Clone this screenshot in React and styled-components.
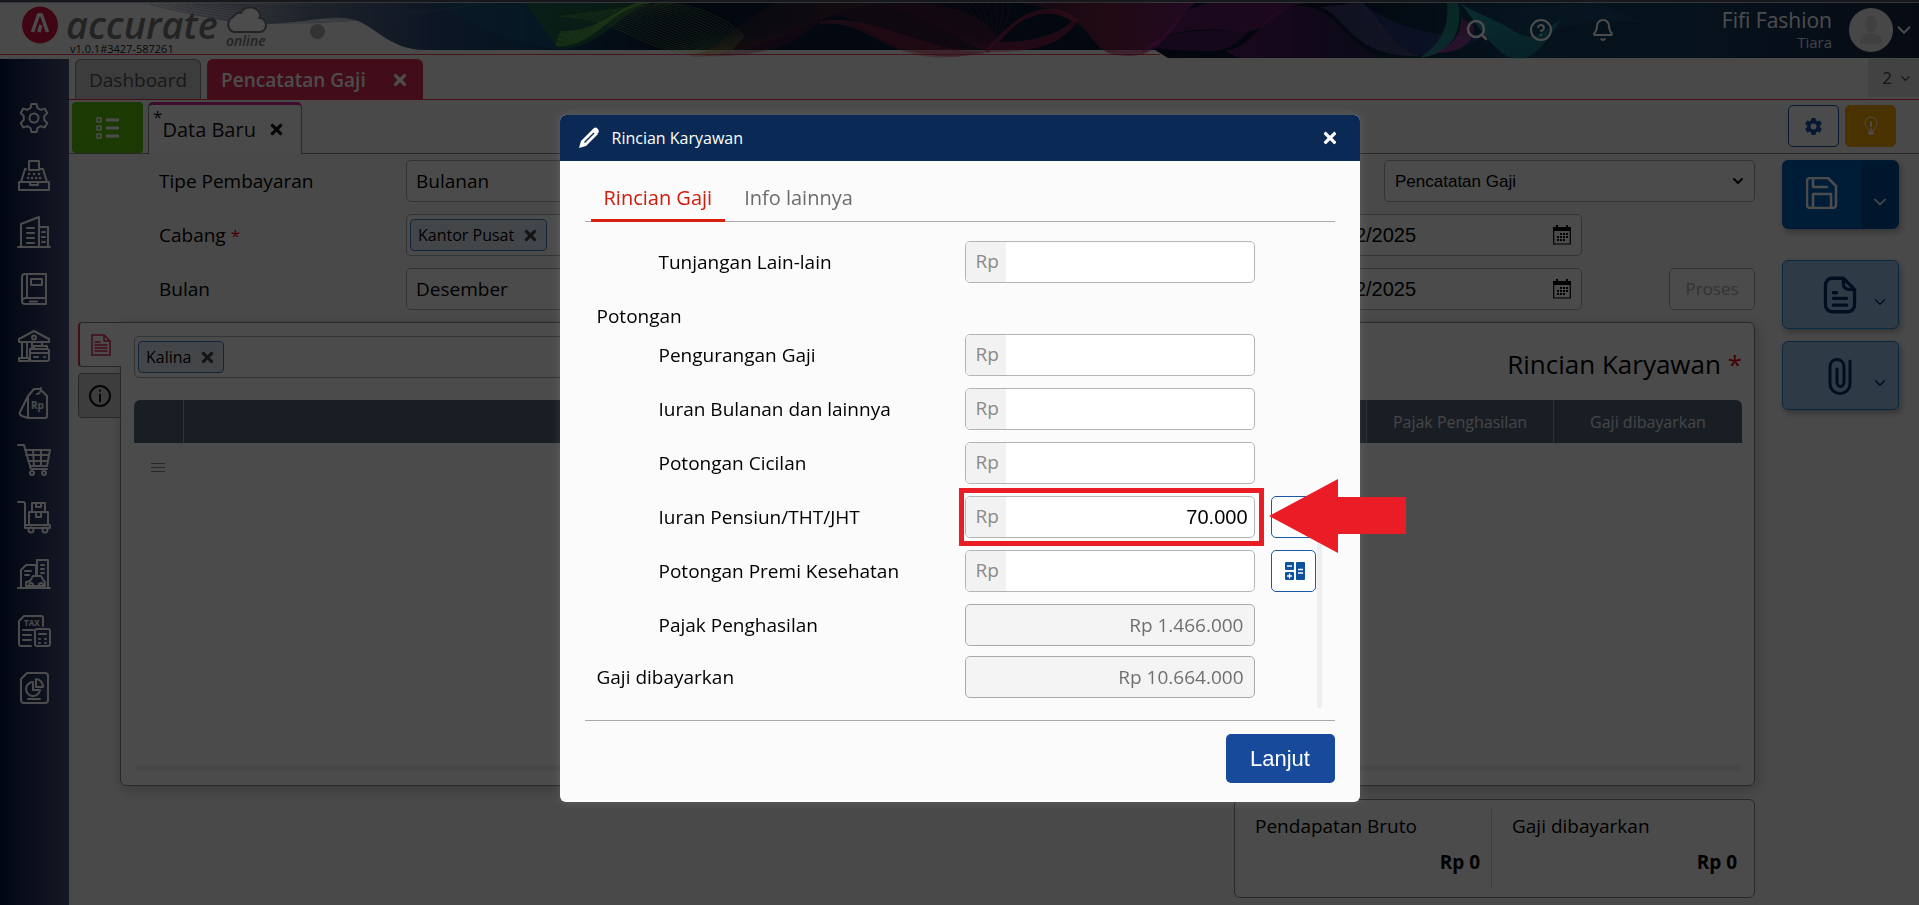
import React from "react";
import styled, { createGlobalStyle, css } from "styled-components";
import { Search, CircleHelp, Bell, ChevronDown } from "lucide-react";
import { FaTimes } from "react-icons/fa";
import { IoSettingsSharp } from "react-icons/io5";

const sans = `"Segoe UI", "Open Sans", "Noto Sans", sans-serif`;
const arial = `"Liberation Sans", Arial, sans-serif`;

const GlobalStyle = createGlobalStyle`
  *, *::before, *::after { box-sizing: border-box; }
  body { margin: 0; background: #f4f4f4; color: #000; font-family: ${sans}; font-size: 19px; line-height: 24px; }
  button, input, select { font: inherit; color: inherit; margin: 0; }
  button { cursor: pointer; }
  svg { display: block; flex: none; }
`;

/* ---------- page shell ---------- */

const Page = styled.div`
  min-height: 100vh;
  display: flex;
  flex-direction: column;
`;

const Header = styled.header`
  position: relative;
  height: 59px;
  display: flex;
  align-items: center;
  justify-content: space-between;
  border-top: 2px solid #4a5060;
  background: #f4f4f4;
`;

const Waves = styled.svg`
  position: absolute;
  inset: 0;
  width: 100%;
  height: 100%;
`;

const Brand = styled.div`
  position: relative;
  display: flex;
  align-items: flex-start;
  padding-left: 22px;
`;

const Wordmark = styled.div`
  margin-left: 8px;
  display: flex;
  flex-direction: column;
`;

const BrandName = styled.span`
  font: italic 600 38px/36px ${sans};
  color: #777;
`;

const Version = styled.span`
  font-size: 11px;
  line-height: 14px;
  padding-left: 4px;
  color: #222;
`;

const CloudMark = styled.div`
  display: flex;
  flex-direction: column;
  align-items: center;
  margin-left: 6px;
  font: italic 600 14px/14px ${sans};
  color: #777;
`;

const StatusDot = styled.span`
  width: 15px;
  height: 15px;
  border-radius: 50%;
  background: #aaa;
  margin: 18px 0 0 42px;
`;

const HeaderTools = styled.div`
  position: relative;
  display: flex;
  align-items: center;
  color: #fff;
  padding: 0 4px 2px 0;
`;

const IconButton = styled.button`
  display: grid;
  place-items: center;
  width: 24px;
  height: 24px;
  padding: 0;
  border: 0;
  background: none;
  color: inherit;
  margin-right: ${(p) => p.$gap || 0}px;
`;

const Account = styled.div`
  text-align: right;
  font-size: 21px;
  line-height: 24px;
  margin-right: 17px;
`;

const AccountUser = styled.div`
  font-size: 15px;
  line-height: 20px;
  color: #d8dce8;
`;

const Avatar = styled.span`
  display: grid;
  place-items: center;
  width: 44px;
  height: 44px;
  border-radius: 50%;
  background: #eee;
`;

const Body = styled.div`
  flex: 1;
  display: flex;
`;

const Sidebar = styled.nav`
  width: 69px;
  flex: none;
  background: linear-gradient(90deg, #00163f, #4a557c);
  display: flex;
  flex-direction: column;
  align-items: center;
  gap: 21px;
  padding: 42px 0 0 1px;
  color: #fff;
`;

const NavLink = styled.a`
  display: block;
  color: inherit;
`;

const Main = styled.main`
  flex: 1;
  min-width: 0;
  display: flex;
  flex-direction: column;
`;

/* ---------- tab bars ---------- */

const TabBar = styled.div`
  display: flex;
  gap: 6px;
  height: 41px;
  padding-left: 6px;
  border-bottom: 1px solid #f0304e;
`;

const PageTab = styled.button`
  display: flex;
  align-items: center;
  gap: 25px;
  padding: 1px 13px 0;
  border: 1px solid #888;
  border-bottom: 0;
  border-radius: 6px 6px 0 0;
  background: #c8c8c8;
  color: #555;
  ${(p) =>
    p.$active &&
    css`
      background: #dc2a52;
      border-color: #dc2a52;
      color: #fff;
      font-weight: 600;
    `}
`;

const TabCount = styled.button`
  display: flex;
  align-items: center;
  justify-content: flex-end;
  gap: 6px;
  width: 51px;
  height: 38px;
  margin-left: auto;
  padding: 0 6px;
  border: 0;
  background: #dcdcdc;
  color: #444;
  font-size: 17px;
`;

const SubBar = styled.div`
  display: flex;
  align-items: flex-end;
  height: 54px;
  padding: 0 23px 0 3px;
  border-bottom: 1px solid #888;
`;

const ListButton = styled.button`
  display: grid;
  place-items: center;
  width: 71px;
  height: 51px;
  padding: 0;
  border: 0;
  border-radius: 4px;
  background: #5cc00c;
  color: #fff;
`;

const RecordTab = styled.button`
  display: flex;
  align-items: center;
  gap: 12px;
  height: 52px;
  margin: 0 0 -1px 5px;
  padding: 0 16px 0 4px;
  border: 1px solid #888;
  border-top: 3px solid #c8269a;
  border-bottom: 0;
  border-radius: 5px 5px 0 0;
  background: #f8f8f8;
  color: #111;
  font-size: 20px;
`;

const Dirty = styled.sup`
  align-self: flex-start;
  margin-right: -12px;
  font-size: 17px;
  line-height: 24px;
`;

const SubTools = styled.div`
  display: flex;
  gap: 6px;
  margin: 0 0 6px auto;
`;

const SquareButton = styled.button`
  display: grid;
  place-items: center;
  width: 51px;
  height: 42px;
  padding: 0;
  border-radius: 5px;
  border: 1px solid ${(p) => (p.$amber ? "#f7a700" : "#1452a8")};
  background: ${(p) => (p.$amber ? "#f7a700" : "#fcfcfc")};
  color: ${(p) => (p.$amber ? "#fff" : "#1452a8")};
`;

/* ---------- record form ---------- */

const Workspace = styled.div`
  flex: 1;
  display: flex;
  gap: 27px;
  padding: 6px 20px 7px 9px;
`;

const Content = styled.div`
  flex: 1;
  min-width: 0;
  display: flex;
  flex-direction: column;
`;

const FormRows = styled.div`
  display: flex;
  flex-direction: column;
  gap: 12px;
  padding-left: 81px;
  margin-bottom: 12px;
`;

const FormRow = styled.div`
  display: flex;
  align-items: center;
  height: 42px;
`;

const FormLabel = styled.label`
  width: 247px;
`;

const Required = styled.span`
  color: #e00;
  font-size: ${(p) => (p.$large ? 26 : 17)}px;
`;

const boxed = css`
  height: 42px;
  border: 1px solid #aaa;
  border-radius: 5px;
  background: #fcfcfc;
`;

const TextInput = styled.input`
  ${boxed}
  width: 420px;
  padding: 0 9px;
`;

const TokenBox = styled.div`
  ${boxed}
  display: flex;
  align-items: center;
  width: ${(p) => (p.$wide ? "620px" : "420px")};
  padding: 0 3px;
`;

const Token = styled.span`
  display: flex;
  align-items: center;
  gap: 8px;
  height: 32px;
  padding: 0 7px;
  border: 1px solid #3f7ac4;
  border-radius: 4px;
  background: #e2ecf6;
  font-size: 16px;
`;

const TokenRemove = styled.button`
  display: grid;
  padding: 0;
  border: 0;
  background: none;
  color: #444;
`;

const FormSide = styled.div`
  display: flex;
  justify-content: ${(p) => (p.$end ? "flex-end" : "space-between")};
  width: 450px;
  margin-left: auto;
`;

const SelectWrap = styled.div`
  ${boxed}
  width: 371px;
  display: grid;
  grid-template-columns: 1fr 24px;
  align-items: center;
  select {
    grid-area: 1 / 1 / 2 / 3;
    height: 40px;
    padding: 0 10px;
    border: 0;
    background: none;
    appearance: none;
    font: 17px ${arial};
  }
  svg { grid-area: 1 / 2; pointer-events: none; }
`;

const DateBox = styled.div`
  ${boxed}
  display: flex;
  align-items: center;
  width: 277px;
  padding: 0 10px;
  input {
    flex: 1;
    min-width: 0;
    padding: 0;
    border: 0;
    background: none;
    font: 20px ${arial};
  }
`;

const ProcessButton = styled.button`
  ${boxed}
  width: 86px;
  padding: 0;
  color: #aaa;
  font-size: 17px;
`;

/* ---------- employee panel ---------- */

const PanelRow = styled.div`
  flex: 1;
  display: flex;
`;

const SideTabs = styled.div`
  display: flex;
  flex-direction: column;
  gap: 6px;
  width: 43px;
  margin-right: -1px;
  z-index: 1;
`;

const SideTab = styled.button`
  display: grid;
  place-items: center;
  height: 45px;
  padding: 0;
  border: 1px solid #888;
  border-radius: 4px 0 0 4px;
  background: #ccc;
  color: #111;
  ${(p) =>
    p.$active &&
    css`
      border-right: 0;
      border-left: 2px solid #dc2a52;
      background: #fafafa;
      color: #dc2a52;
    `}
`;

const Panel = styled.section`
  flex: 1;
  display: flex;
  flex-direction: column;
  padding: 13px 12px 13px 13px;
  border: 1px solid #888;
  border-radius: 0 6px 6px 6px;
  background: #fafafa;
  box-shadow: 2px 3px 14px rgba(0, 0, 0, 0.22);
`;

const PanelTop = styled.div`
  display: flex;
  align-items: flex-start;
  justify-content: space-between;
  height: 64px;
`;

const PanelTitle = styled.h2`
  margin: 10px 0 0;
  font-size: 26px;
  line-height: 36px;
  font-weight: 400;
`;

const Grid = styled.table`
  width: 100%;
  border-collapse: separate;
  border-spacing: 0;
  table-layout: fixed;
  th {
    height: 43px;
    padding: 0;
    background: #56657c;
    color: #e4e6ea;
    font-size: 16px;
    font-weight: 400;
    border-right: 1px solid #a0a8b4;
  }
  th:first-child { border-top-left-radius: 6px; }
  th:last-child { border-top-right-radius: 6px; border-right: 0; }
  td { padding: 17px 17px 0; color: #888; }
`;

const ScrollTrack = styled.div`
  height: 6px;
  margin: auto 2px 1px;
  border-radius: 3px;
  background: #eee;
`;

const Summary = styled.section`
  display: flex;
  align-self: flex-end;
  width: 521px;
  margin-top: 13px;
  padding: 9px 0;
  border: 1px solid #888;
  border-radius: 6px;
  background: #fafafa;
`;

const SummaryCell = styled.div`
  flex: ${(p) => (p.$last ? 1 : "0 0 256px")};
  padding: 5px ${(p) => (p.$last ? 17 : 11)}px 14px 20px;
  border-left: ${(p) => (p.$last ? "1px solid #ccc" : "0")};
`;

const SummaryValue = styled.div`
  margin-top: 12px;
  text-align: right;
  font-weight: 700;
`;

const Actions = styled.aside`
  display: flex;
  flex-direction: column;
  gap: 12px;
  width: 117px;
`;

const ActionButton = styled.button`
  display: grid;
  grid-template-columns: 1fr 36px;
  align-items: center;
  justify-items: center;
  height: 69px;
  padding: 0;
  border: 1px solid #1c86d8;
  border-radius: 6px;
  background: #9cc6ec;
  color: #00306c;
  box-shadow: 2px 3px 6px rgba(0, 0, 0, 0.3);
  svg:first-child { justify-self: end; margin-right: 3px; }
  svg:last-child { margin-top: 14px; }
  ${(p) =>
    p.$primary &&
    css`
      margin-bottom: 19px;
      border-color: #0058ac;
      background: linear-gradient(90deg, #0062ba 68%, #004c98 68%);
      color: #fff;
      svg:first-child { margin: 0 24px 3px 0; }
    `}
`;

/* ---------- dialog ---------- */

const Backdrop = styled.div`
  position: fixed;
  inset: 0;
  z-index: 10;
  display: flex;
  justify-content: center;
  align-items: flex-start;
  padding-top: 115px;
  background: rgba(0, 0, 0, 0.7);
`;

const Dialog = styled.section`
  width: 800px;
  border-radius: 6px;
  background: #fbfbfb;
  box-shadow: 0 0 8px rgba(255, 255, 255, 0.12);
`;

const DialogHeader = styled.header`
  display: flex;
  align-items: center;
  height: 46px;
  padding: 0 18px;
  border-radius: 6px 6px 0 0;
  background: #0a2a55;
  color: #fff;
  h1 {
    flex: 1;
    margin: 0 0 0 12px;
    font-size: 16px;
    font-weight: 400;
  }
`;

const DialogBody = styled.div`
  padding: 18px 25px 19px;
`;

const DialogTabs = styled.div`
  display: flex;
  gap: 6px;
  padding-left: 6px;
  border-bottom: 1px solid #aaa;
`;

const DialogTab = styled.button`
  height: 43px;
  margin-bottom: -1px;
  padding: 0 13px 2px;
  border: 0;
  border-bottom: 3px solid ${(p) => (p.$active ? "#d81e0c" : "transparent")};
  background: none;
  color: ${(p) => (p.$active ? "#d01c0c" : "#6c6c6c")};
  font-size: 20px;
`;

const FieldArea = styled.div`
  display: flex;
  justify-content: space-between;
  padding: 19px 13px 12px 12px;
`;

const Fields = styled.div`
  display: flex;
  flex-direction: column;
  gap: 10px;
  width: 720px;
  padding-bottom: 10px;
`;

const FieldGroup = styled.section`
  display: flex;
  flex-direction: column;
  gap: 12px;
`;

const Field = styled.div`
  position: relative;
  display: flex;
  align-items: center;
  height: 42px;
`;

const GroupHeading = styled.h3`
  margin: 0;
  padding-top: 12px;
  font-size: 19px;
  line-height: 22px;
  height: 29px;
  font-weight: 400;
`;

const FieldLabel = styled.label`
  width: 368px;
  padding-left: ${(p) => (p.$indent ? 62 : 0)}px;
`;

const MoneyBox = styled.div`
  display: flex;
  width: 290px;
  height: 42px;
  border: 1px solid #b4b4b4;
  border-radius: 5px;
  background: #fff;
  overflow: hidden;
  span {
    width: 40px;
    padding-left: 10px;
    line-height: 38px;
    background: #f2f2f2;
    color: #8a8a8a;
  }
  input {
    flex: 1;
    min-width: 0;
    padding: 0 6px;
    border: 0;
    background: none;
    font: 20px ${arial};
    text-align: right;
    outline: 0;
  }
`;

const Total = styled.input`
  width: 290px;
  height: 42px;
  padding: 0 10px;
  border: 1px solid #aaa;
  border-radius: 5px;
  background: #f4f4f4;
  color: #707070;
  text-align: right;
`;

const CalcButton = styled.button`
  display: grid;
  place-items: center;
  width: 45px;
  height: 42px;
  margin-left: 16px;
  padding: 0 0 0 4px;
  border: 1px solid #1858a4;
  border-radius: 5px;
  background: #fff;
  color: #0f529c;
`;

const FieldScroll = styled.div`
  width: 5px;
  height: 200px;
  align-self: flex-end;
  border-radius: 3px;
  background: #eeeef0;
`;

const DialogFooter = styled.footer`
  display: flex;
  justify-content: flex-end;
  padding-top: 13px;
  border-top: 1px solid #aaa;
`;

const Submit = styled.button`
  width: 109px;
  height: 49px;
  border: 0;
  border-radius: 5px;
  background: #174a9b;
  color: #fff;
  font: 22px ${arial};
`;

/* callout drawn over the highlighted row */
const Highlight = styled.span`
  position: absolute;
  left: 362px;
  top: -8px;
  width: 305px;
  height: 58px;
  border: 5px solid #ea1c26;
  pointer-events: none;
`;

const Arrow = styled.svg`
  position: absolute;
  left: 672px;
  top: -17px;
  pointer-events: none;
`;

/* ---------- drawings ---------- */

function Line({ size = 34, width = 2, children, box = 34 }) {
  return (
    <svg
      width={size}
      height={size}
      viewBox={`0 0 ${box} ${box}`}
      fill="none"
      stroke="currentColor"
      strokeWidth={width}
      strokeLinecap="round"
      strokeLinejoin="round"
      aria-hidden="true"
    >
      {children}
    </svg>
  );
}

const navIcons = [
  [
    "Pengaturan",
    <>
      <path d="M14.5 3h5l1 4 3.2 1.8 4-1.2 2.6 4.4-3 2.9v4.2l3 2.9-2.6 4.4-4-1.2-3.2 1.8-1 4h-5l-1-4-3.2-1.8-4 1.2L3.700 22l3-2.900v-4.200l-3-2.900 2.600-4.400 4 1.200L13.500 7z" />
      <circle cx="17" cy="17" r="4.500" />
    </>,
  ],
  [
    "Kasir",
    <>
      <path d="M12 12V3h10v9M9 11h-1L4 24h26l-4-13h-4M12 12h10M2 24h30v8H2zM13 24v3h8v-3" />
      <path d="M12 16h.1M17 16h.1M22 16h.1M11 20h.1M15 20h.1M19 20h.1M23 20h.1" strokeWidth="2.500" />
    </>,
  ],
  [
    "Perusahaan",
    <>
      <path d="M1 32h32M4 32V9l18-7v30M22 12h9v20" />
      <path d="M10 13h7M10 18h7M10 23h7M10 28h7M25 17h3M25 22h3M25 27h3" />
    </>,
  ],
  [
    "Buku Besar",
    <>
      <path d="M8 2h21v24H8a4 4 0 0 0-3 3V5a3 3 0 0 1 3-3zM5 29a3 3 0 0 0 3 3h21v-6M10 2v24M14 7h11v6H14z" />
      <path d="M13 29.500h7" />
    </>,
  ],
  [
    "Kas & Bank",
    <>
      <path d="M2 12v-2L17 2l15 8v3H2zM5 13v15M10 13v15M25 13v4M2 32h10v-3H2zM15 13v5" />
      <circle cx="17" cy="8.500" r="2" />
      <path d="M13 20h17a2 2 0 0 1 2 2v8a2 2 0 0 1-2 2H15a2 2 0 0 1-2-2zM17 20v-3h13v3M13 24h19M17 28h4M27 28h1" />
    </>,
  ],
  [
    "Penjualan",
    <>
      <path d="M11 10l6-7h6l7 7v20a2 2 0 0 1-2 2H13a2 2 0 0 1-2-2zM11 10L3 26c-1 2 0 3 2 4l6 2M20 8c2 0 4-2 4-6" />
      <text x="14" y="23" fontSize="10" fontWeight="700" fill="currentColor" stroke="none" fontFamily="Open Sans">
        Rp
      </text>
    </>,
  ],
  [
    "Pembelian",
    <>
      <path d="M1 2h6l6 21c0 2 1 3 2 3h15M8 7h25l-3 16H13M9 12h23M11 18h20M16 7l1 16M24 7v16" />
      <circle cx="15" cy="30" r="2" />
      <circle cx="27" cy="30" r="2" />
    </>,
  ],
  [
    "Persediaan",
    <>
      <path d="M1 2h5a2 2 0 0 1 2 2v20M8 25h25v3H8zM12 25V12h19v13M15 12V3h13v9M19 3v4h5V3M19 12v5h5v-5" />
      <circle cx="14" cy="30" r="2.500" />
      <circle cx="28" cy="30" r="2.500" />
    </>,
  ],
  [
    "Aset Tetap",
    <>
      <path d="M1 31h32M4 31V13l5-5h10v11M20 18V3h11v28M8 14h6M8 18h4M24 8h3M24 12h3M24 16h3" />
      <path d="M9 29v-4l4-1 3-5h8l3 5 1 1v4H9z" />
      <circle cx="14" cy="28" r="2" />
      <circle cx="24" cy="28" r="2" />
    </>,
  ],
  [
    "Pajak",
    <>
      <path d="M14 32H4a2 2 0 0 1-2-2V7l5-5h17a2 2 0 0 1 2 2v8M6 16h10M6 21h8M6 26h8" />
      <path d="M20 15h11a2 2 0 0 1 2 2v13a2 2 0 0 1-2 2H20a2 2 0 0 1-2-2V17c0-1 1-2 2-2zM22 20h7M22 25h1M28 25h1M22 29h1M28 29h1" />
      <text x="7" y="12" fontSize="8" fontWeight="700" fill="currentColor" stroke="none" fontFamily="Open Sans">
        TAX
      </text>
    </>,
  ],
  [
    "Laporan",
    <>
      <path d="M10 2h18a3 3 0 0 1 3 3v24a3 3 0 0 1-3 3H7a3 3 0 0 1-3-3V8zM11 28h12" />
      <path d="M16 11a7 7 0 1 0 7 8h-7zM19 8v8h7a7 8 0 0 0-7-8z" />
    </>,
  ],
];

/* lines interpolated between two cubic curves, each given as 8 numbers */
function Ribbon({ a, b, n, color, opacity = 0.5, width = 1 }) {
  return (
    <g fill="none" stroke={color} strokeWidth={width} opacity={opacity}>
      {Array.from({ length: n }, (_, i) => {
        const t = i / (n - 1);
        const c = a.map((v, k) => Math.round((v + (b[k] - v) * t) * 10) / 10);
        return <path key={i} d={`M${c[0]} ${c[1]}C${c[2]} ${c[3]} ${c[4]} ${c[5]} ${c[6]} ${c[7]}`} />;
      })}
    </g>
  );
}

function HeaderWaves() {
  return (
    <Waves viewBox="0 0 1919 57" preserveAspectRatio="none" aria-hidden="true">
      <defs>
        <linearGradient id="sea" x1="0" x2="1">
          <stop offset="0" stopColor="#9aa0ac" stopOpacity="0" />
          <stop offset="0.1" stopColor="#6d7890" />
          <stop offset="0.17" stopColor="#2c4a78" />
          <stop offset="0.22" stopColor="#14466c" />
          <stop offset="0.3" stopColor="#0c1c38" />
          <stop offset="0.66" stopColor="#0a1630" />
          <stop offset="0.78" stopColor="#12405f" />
          <stop offset="0.88" stopColor="#143c60" />
          <stop offset="1" stopColor="#1a2442" />
        </linearGradient>
        <linearGradient id="rose" x1="0" x2="1">
          <stop offset="0" stopColor="#c83050" stopOpacity="0.25" />
          <stop offset="0.5" stopColor="#b02850" stopOpacity="0.6" />
          <stop offset="1" stopColor="#b8289c" stopOpacity="0.6" />
        </linearGradient>
        <linearGradient id="violet" x1="0" x2="1">
          <stop offset="0" stopColor="#a82090" stopOpacity="0.5" />
          <stop offset="1" stopColor="#3a2466" stopOpacity="0.5" />
        </linearGradient>
        <linearGradient id="glow" x1="0" x2="1" y1="0" y2="1">
          <stop offset="0" stopColor="#24c6c0" stopOpacity="0.7" />
          <stop offset="1" stopColor="#24c6c0" stopOpacity="0.3" />
        </linearGradient>
      </defs>
      <path d="M0 .5H1919" stroke="#b4b8c0" strokeWidth="1" />
      <path d="M0 52.500H1160" stroke="#f0405c" strokeWidth="1" />
      <path d="M130 1C190 8 225 25 270 22S335 12 355 18S390 48 425 48H1155L1168 56H1919V1z" fill="url(#sea)" />
      <path d="M440 1h85l34 46c-40-2-90-24-119-46z" fill="#1a5a88" opacity="0.5" />
      <path d="M525 1h125c-30 8-45 44-91 46z" fill="#2f8a3c" opacity="0.5" />
      <Ribbon a={[150, 2, 220, 22, 300, 30, 440, 8]} b={[220, 2, 320, 4, 400, 16, 480, 2]} n={9} color="#46628c" opacity={0.35} />
      <Ribbon a={[555, 44, 600, 44, 610, 2, 650, 1]} b={[560, 30, 600, 30, 620, 4, 640, 1]} n={12} color="#84e04a" opacity={0.55} />
      <Ribbon a={[560, 14, 640, 20, 640, 60, 730, 50]} b={[660, 1, 700, 1, 730, 20, 745, 34]} n={22} color="#8fd648" opacity={0.35} />
      <Ribbon a={[690, 54, 730, 46, 730, 20, 780, 1]} b={[700, 54, 790, 46, 800, 10, 880, 1]} n={22} color="#b8503c" opacity={0.3} />
      <path d="M700 54C780 48 800 12 870 2h60c30 4 80 20 60 46-40 14-90 4-120-18s-40-20-60-2-60 28-110 26z" fill="#802040" opacity="0.35" />
      <Ribbon a={[820, 20, 870, 10, 930, 54, 990, 50]} b={[820, 22, 870, 14, 880, 62, 960, 54]} n={16} color="#d0305a" opacity={0.4} />
      <Ribbon a={[880, 1, 920, 10, 960, 40, 990, 50]} b={[1010, 1, 1010, 14, 1000, 36, 990, 46]} n={18} color="#902850" opacity={0.4} />
      <path d="M985 50C1015 10 1050 -6 1078 18C1060 46 1030 50 985 50zM1000 40C1030 40 1055 34 1072 20C1050 4 1020 12 1000 40z" fillRule="evenodd" fill="#d83060" opacity="0.5" />
      <path d="M1020 1C1070 0 1120 1 1195 1C1175 16 1165 54 1130 54S1100 40 1076 20C1060 8 1040 4 1020 1z" fill="url(#rose)" />
      <path d="M1140 52C1170 40 1170 6 1210 1h95C1272 6 1270 30 1245 29S1180 22 1150 42z" fill="#b02494" opacity="0.5" />
      <path d="M1150 44C1175 24 1210 30 1252 28C1238 38 1230 50 1210 49S1170 50 1150 44z" fill="#b828b0" opacity="0.35" />
      <path d="M1225 49C1260 44 1262 4 1300 4S1350 50 1385 56H1240z" fill="url(#violet)" />
      <path d="M1320 5C1345 12 1350 56 1420 54C1390 44 1380 16 1362 1z" fill="#7464b4" opacity="0.45" />
      <path d="M1362 1C1385 30 1400 50 1425 54C1450 50 1470 44 1490 30C1455 40 1400 30 1362 1z" fill="#4e50c0" opacity="0.4" />
      <path d="M1447 1C1450 30 1436 44 1420 56C1450 52 1464 30 1458 1z" fill="#24c0a0" opacity="0.6" />
      <path d="M1461 16C1462 34 1450 48 1432 50C1460 54 1474 40 1474 24z" fill="#d83ca0" opacity="0.5" />
      <path d="M1460 1c14 10 32 14 54 28s30-2 48-12c-14 18-24 40-44 40s-38-32-58-56z" fill="url(#glow)" />
      <Ribbon a={[1460, 1, 1500, 14, 1540, 4, 1600, 1]} b={[1480, 20, 1520, 60, 1540, 10, 1640, 20]} n={12} color="#2f78b8" opacity={0.25} />
    </Waves>
  );
}

function DocIcon({ size = 34, width = 3 }) {
  return (
    <Line size={size} width={width}>
      <path d="M20 2H10a6 6 0 0 0-6 6v18a6 6 0 0 0 6 6h14a6 6 0 0 0 6-6V12zM20 2v5a5 5 0 0 0 5 5h5M11 15h3M11 20h12M11 26h12" />
    </Line>
  );
}

function CalendarIcon() {
  return (
    <svg width="18" height="20" viewBox="0 0 18 20" aria-hidden="true">
      <path d="M0 2h3V0h2v2h8V0h2v2h3v4H0z" fill="#000" />
      <path d="M.7 6v13h16.600V6" fill="none" stroke="#000" strokeWidth="1.200" />
      <path d="M7 8h2v2H7zM10 8h2v2h-2zM13 8h2v2h-2zM4 11h2v2H4zM7 11h2v2H7zM10 11h2v2h-2zM13 11h2v2h-2zM4 14h2v2H4zM7 14h2v2H7zM10 14h2v2h-2z" fill="#000" />
    </svg>
  );
}

function CalcIcon() {
  return (
    <svg width="20" height="20" viewBox="0 0 20 20" aria-hidden="true">
      <rect x="0" y="1" width="9" height="8" rx="1" fill="currentColor" />
      <rect x="0" y="11" width="9" height="8" rx="1" fill="currentColor" />
      <rect x="11" y="1" width="9" height="18" rx="1" fill="currentColor" />
      <path d="M2 5h5M2 15h5M4.500 12.500v5M13 8.500h5M13 12h5" stroke="#fff" strokeWidth="1.300" />
    </svg>
  );
}

function PencilIcon() {
  return (
    <svg width="22" height="22" viewBox="0 0 22 22" aria-hidden="true">
      <path d="M1 21l2-7L15 2l5 5L8 19z" fill="#fff" />
      <path d="M16 1c2-2 6 2 4.500 4.500l-1.500 1.500L14.500 2.500z" fill="#fff" />
      <path d="M6.500 15.500L16 6" stroke="#0a2a55" strokeWidth="1.400" />
    </svg>
  );
}

function MoneyField({ id, label, value = "", calc, highlighted }) {
  return (
    <Field>
      <FieldLabel $indent htmlFor={id}>
        {label}
      </FieldLabel>
      <MoneyBox>
        <span>Rp</span>
        <input id={id} defaultValue={value} />
      </MoneyBox>
      {calc && (
        <CalcButton type="button" aria-label={`Hitung ${label}`}>
          {!highlighted && <CalcIcon />}
        </CalcButton>
      )}
      {highlighted && (
        <>
          <Highlight />
          <Arrow width="138" height="76" viewBox="0 0 138 76" aria-hidden="true">
            <path d="M0 37L69 0v18h68v37H69v19z" fill="#ea1c26" />
          </Arrow>
        </>
      )}
    </Field>
  );
}

export default function App() {
  return (
    <>
      <GlobalStyle />
      <Page>
        <Header>
          <HeaderWaves />
          <Brand>
            <svg width="36" height="38" viewBox="0 0 36 38" aria-hidden="true">
              <ellipse cx="18" cy="19" rx="18" ry="18.500" fill="#d8123c" />
              <path d="M10.500 26L16.500 9h3l6 17M17 26l1.800-7" fill="none" stroke="#fff" strokeWidth="3.400" />
            </svg>
            <Wordmark>
              <BrandName>accurate</BrandName>
              <Version>v1.0.1#3427-587261</Version>
            </Wordmark>
            <CloudMark>
              <svg width="44" height="28" viewBox="0 0 44 28" fill="#fff" stroke="#777" strokeWidth="2" aria-hidden="true">
                <path d="M10 26a8 8 0 0 1-1-15c2-3 5-5 8-4C20-1 35 0 36 9c0 1 0 2-.5 3C44 13 44 25 36 26z" />
              </svg>
              online
            </CloudMark>
            <StatusDot />
          </Brand>
          <HeaderTools>
            <IconButton $gap={40} aria-label="Cari">
              <Search size={24} strokeWidth={2.5} />
            </IconButton>
            <IconButton $gap={38} aria-label="Bantuan">
              <CircleHelp size={24} />
            </IconButton>
            <IconButton $gap={107} aria-label="Notifikasi">
              <Bell size={24} />
            </IconButton>
            <Account>
              Fifi Fashion
              <AccountUser>Tiara</AccountUser>
            </Account>
            <Avatar>
              <svg width="22" height="28" viewBox="0 0 22 28" fill="#d8d8d8" aria-hidden="true">
                <ellipse cx="11" cy="8" rx="6" ry="8" />
                <path d="M0 28c0-8 3-10 11-11 8 1 11 3 11 11z" />
              </svg>
            </Avatar>
            <ChevronDown size={22} />
          </HeaderTools>
        </Header>
        <Body>
          <Sidebar>
            {navIcons.map(([name, art]) => (
              <NavLink key={name} href="#" aria-label={name}>
                <Line size={36} box={36}>
                  {art}
                </Line>
              </NavLink>
            ))}
          </Sidebar>
          <Main>
            <TabBar>
              <PageTab>Dashboard</PageTab>
              <PageTab $active>
                Pencatatan Gaji <FaTimes size={18} />
              </PageTab>
              <TabCount>
                2 <ChevronDown size={15} />
              </TabCount>
            </TabBar>
            <SubBar>
              <ListButton aria-label="Daftar">
                <Line size={24} box={24} width={3}>
                  <path d="M10 4h13M10 12h13M10 20h13" strokeLinecap="butt" />
                  <path d="M1 2h4v4H1zM1 10h4v4H1zM1 18h4v4H1z" strokeWidth="1.500" />
                </Line>
              </ListButton>
              <RecordTab>
                <Dirty>*</Dirty>
                Data Baru <FaTimes size={17} />
              </RecordTab>
              <SubTools>
                <SquareButton aria-label="Pengaturan formulir">
                  <IoSettingsSharp size={19} />
                </SquareButton>
                <SquareButton $amber aria-label="Tips">
                  <Line size={20} box={20} width={1}>
                    <path d="M7 14c0-2-3-3-3-7a6 6 0 0 1 12 0c0 4-3 5-3 7z" />
                    <path d="M8.500 17h3" strokeWidth="3" />
                    <path d="M10 6v4M10 12.500v.1" strokeWidth="2" />
                  </Line>
                </SquareButton>
              </SubTools>
            </SubBar>
            <Workspace>
              <Content>
                <FormRows>
                  <FormRow>
                    <FormLabel htmlFor="tipe">Tipe Pembayaran</FormLabel>
                    <TextInput id="tipe" defaultValue="Bulanan" />
                    <FormSide $end>
                      <SelectWrap>
                        <select aria-label="Jenis transaksi">
                          <option>Pencatatan Gaji</option>
                        </select>
                        <ChevronDown size={16} strokeWidth={3} />
                      </SelectWrap>
                    </FormSide>
                  </FormRow>
                  <FormRow>
                    <FormLabel as="div">
                      Cabang <Required>*</Required>
                    </FormLabel>
                    <TokenBox>
                      <Token>
                        Kantor Pusat
                        <TokenRemove aria-label="Hapus Kantor Pusat">
                          <FaTimes size={17} />
                        </TokenRemove>
                      </Token>
                    </TokenBox>
                    <FormSide>
                      <DateBox>
                        <input aria-label="Tanggal awal" defaultValue="01/12/2025" />
                        <CalendarIcon />
                      </DateBox>
                    </FormSide>
                  </FormRow>
                  <FormRow>
                    <FormLabel htmlFor="bulan">Bulan</FormLabel>
                    <TextInput id="bulan" defaultValue="Desember" />
                    <FormSide>
                      <DateBox>
                        <input aria-label="Tanggal akhir" defaultValue="31/12/2025" />
                        <CalendarIcon />
                      </DateBox>
                      <ProcessButton disabled>Proses</ProcessButton>
                    </FormSide>
                  </FormRow>
                </FormRows>
                <PanelRow>
                  <SideTabs>
                    <SideTab $active aria-label="Rincian">
                      <Line size={22} box={22} width={1.5}>
                        <path d="M2 1h12l6 6v14H2zM14 1v6h6M5 8h5M5 11h12M5 14h12M5 17h12" />
                      </Line>
                    </SideTab>
                    <SideTab aria-label="Info">
                      <Line size={22} box={22} width={2}>
                        <circle cx="11" cy="11" r="10" />
                        <path d="M11 9.500v7M11 5.500v.2" />
                      </Line>
                    </SideTab>
                  </SideTabs>
                  <Panel>
                    <PanelTop>
                      <TokenBox $wide>
                        <Token>
                          Kalina
                          <TokenRemove aria-label="Hapus Kalina">
                            <FaTimes size={17} />
                          </TokenRemove>
                        </Token>
                      </TokenBox>
                      <PanelTitle>
                        Rincian Karyawan <Required $large>*</Required>
                      </PanelTitle>
                    </PanelTop>
                    <Grid>
                      <colgroup>
                        <col style={{ width: 50 }} />
                        <col />
                        <col style={{ width: 187 }} />
                        <col style={{ width: 188 }} />
                      </colgroup>
                      <thead>
                        <tr>
                          <th aria-label="Urutan" />
                          <th aria-label="Karyawan" />
                          <th>Pajak Penghasilan</th>
                          <th>Gaji dibayarkan</th>
                        </tr>
                      </thead>
                      <tbody>
                        <tr>
                          <td>
                            <Line size={14} box={14} width={1}>
                              <path d="M0 3.500h14M0 7.500h14M0 11.500h14" />
                            </Line>
                          </td>
                        </tr>
                      </tbody>
                    </Grid>
                    <ScrollTrack />
                  </Panel>
                </PanelRow>
                <Summary>
                  <SummaryCell>
                    Pendapatan Bruto
                    <SummaryValue>Rp 0</SummaryValue>
                  </SummaryCell>
                  <SummaryCell $last>
                    Gaji dibayarkan
                    <SummaryValue>Rp 0</SummaryValue>
                  </SummaryCell>
                </Summary>
              </Content>
              <Actions>
                <ActionButton $primary aria-label="Simpan">
                  <Line size={32} box={32} width={2.5}>
                    <path d="M4 1h18l8 8v19a3 3 0 0 1-3 3H4a3 3 0 0 1-3-3V4a3 3 0 0 1 3-3zM7 1v9h14M7 31V17h18v14" />
                  </Line>
                  <ChevronDown size={20} />
                </ActionButton>
                <ActionButton aria-label="Dokumen">
                  <DocIcon size={38} />
                  <ChevronDown size={18} />
                </ActionButton>
                <ActionButton aria-label="Lampiran">
                  <Line size={38} box={38} width={3}>
                    <path d="M29 4v22c0 14-20 14-20 0V10c0-10 14-10 14 0v15c0 6-7 6-7 0V12" />
                  </Line>
                  <ChevronDown size={18} />
                </ActionButton>
              </Actions>
            </Workspace>
          </Main>
        </Body>
      </Page>

      <Backdrop>
        <Dialog role="dialog" aria-modal="true" aria-labelledby="dialog-title">
          <DialogHeader>
            <PencilIcon />
            <h1 id="dialog-title">Rincian Karyawan</h1>
            <IconButton aria-label="Tutup">
              <FaTimes size={18} />
            </IconButton>
          </DialogHeader>
          <DialogBody>
            <DialogTabs role="tablist">
              <DialogTab $active role="tab" aria-selected="true">
                Rincian Gaji
              </DialogTab>
              <DialogTab role="tab" aria-selected="false">
                Info lainnya
              </DialogTab>
            </DialogTabs>
            <FieldArea>
              <Fields>
                <MoneyField id="tunjangan" label="Tunjangan Lain-lain" />
                <FieldGroup>
                  <GroupHeading>Potongan</GroupHeading>
                  <MoneyField id="pengurangan" label="Pengurangan Gaji" />
                  <MoneyField id="iuran" label="Iuran Bulanan dan lainnya" />
                  <MoneyField id="cicilan" label="Potongan Cicilan" />
                  <MoneyField id="pensiun" label="Iuran Pensiun/THT/JHT" value="70.000" calc highlighted />
                  <MoneyField id="premi" label="Potongan Premi Kesehatan" calc />
                  <Field>
                    <FieldLabel $indent htmlFor="pajak">
                      Pajak Penghasilan
                    </FieldLabel>
                    <Total id="pajak" readOnly value="Rp 1.466.000" />
                  </Field>
                </FieldGroup>
                <Field>
                  <FieldLabel htmlFor="dibayarkan">Gaji dibayarkan</FieldLabel>
                  <Total id="dibayarkan" readOnly value="Rp 10.664.000" />
                </Field>
              </Fields>
              <FieldScroll />
            </FieldArea>
            <DialogFooter>
              <Submit>Lanjut</Submit>
            </DialogFooter>
          </DialogBody>
        </Dialog>
      </Backdrop>
    </>
  );
}
